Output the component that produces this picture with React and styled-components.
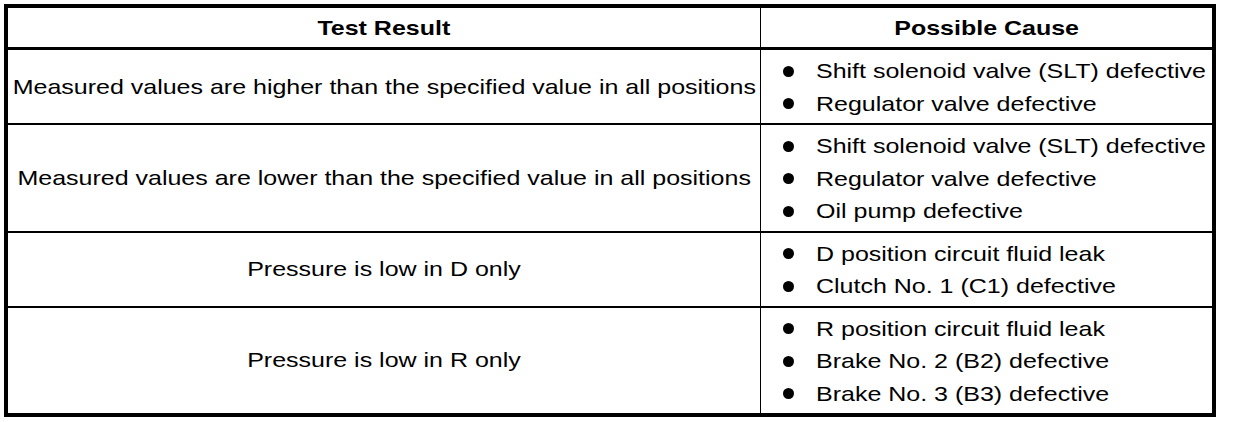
import React from "react";
import styled, { createGlobalStyle } from "styled-components";

const Global = createGlobalStyle`
  html, body { margin: 0; padding: 0; background: #fff; }
  body { font-family: "Liberation Sans", Arial, sans-serif; color: #000; }
`;

const Table = styled.div`
  margin: 4px 0 0 4px;
  width: 1212px;
  box-sizing: border-box;
  border: 4px solid #000;
  display: flex;
  flex-direction: column;
`;

const Row = styled.div`
  display: grid;
  grid-template-columns: 752px 1fr;
  border-bottom: ${(p) => p.$line}px solid #000;
  &:last-child { border-bottom: none; }
`;

const HeadCell = styled.div`
  height: 39px;
  display: flex;
  align-items: center;
  justify-content: center;
  font-weight: bold;
  font-size: 21px;
  border-left: ${(p) => (p.$divider ? "1px solid #000" : "none")};
`;

const ResultCell = styled.div`
  display: flex;
  align-items: center;
  justify-content: center;
  font-size: 21px;
  text-align: center;
`;

const Wide = styled.span`
  display: inline-block;
  white-space: nowrap;
  transform: scaleX(1.19);
  transform-origin: ${(p) => (p.$left ? "left center" : "center center")};
`;

const CauseCell = styled.ul`
  margin: 0;
  list-style: none;
  border-left: 1px solid #000;
  padding: 5px 0 3px 22px;
  font-size: 21px;
  line-height: 32.5px;
`;

const Cause = styled.li`
  display: flex;
  align-items: center;
  gap: 22px;
  white-space: nowrap;
`;

const Dot = styled.span`
  width: 11px;
  height: 11px;
  border-radius: 50%;
  background: #000;
  flex: none;
`;

const rows = [
  {
    result: "Measured values are higher than the specified value in all positions",
    causes: ["Shift solenoid valve (SLT) defective", "Regulator valve defective"],
  },
  {
    result: "Measured values are lower than the specified value in all positions",
    causes: [
      "Shift solenoid valve (SLT) defective",
      "Regulator valve defective",
      "Oil pump defective",
    ],
  },
  {
    result: "Pressure is low in D only",
    causes: ["D position circuit fluid leak", "Clutch No. 1 (C1) defective"],
  },
  {
    result: "Pressure is low in R only",
    causes: [
      "R position circuit fluid leak",
      "Brake No. 2 (B2) defective",
      "Brake No. 3 (B3) defective",
    ],
  },
];

export default function App() {
  return (
    <>
      <Global />
      <Table>
        <Row $line={3}>
          <HeadCell>
            <Wide>Test Result</Wide>
          </HeadCell>
          <HeadCell $divider>
            <Wide>Possible Cause</Wide>
          </HeadCell>
        </Row>
        {rows.map((r, i) => (
          <Row key={i} $line={2}>
            <ResultCell>
              <Wide>{r.result}</Wide>
            </ResultCell>
            <CauseCell>
              {r.causes.map((c) => (
                <Cause key={c}>
                  <Dot />
                  <Wide $left>{c}</Wide>
                </Cause>
              ))}
            </CauseCell>
          </Row>
        ))}
      </Table>
    </>
  );
}
